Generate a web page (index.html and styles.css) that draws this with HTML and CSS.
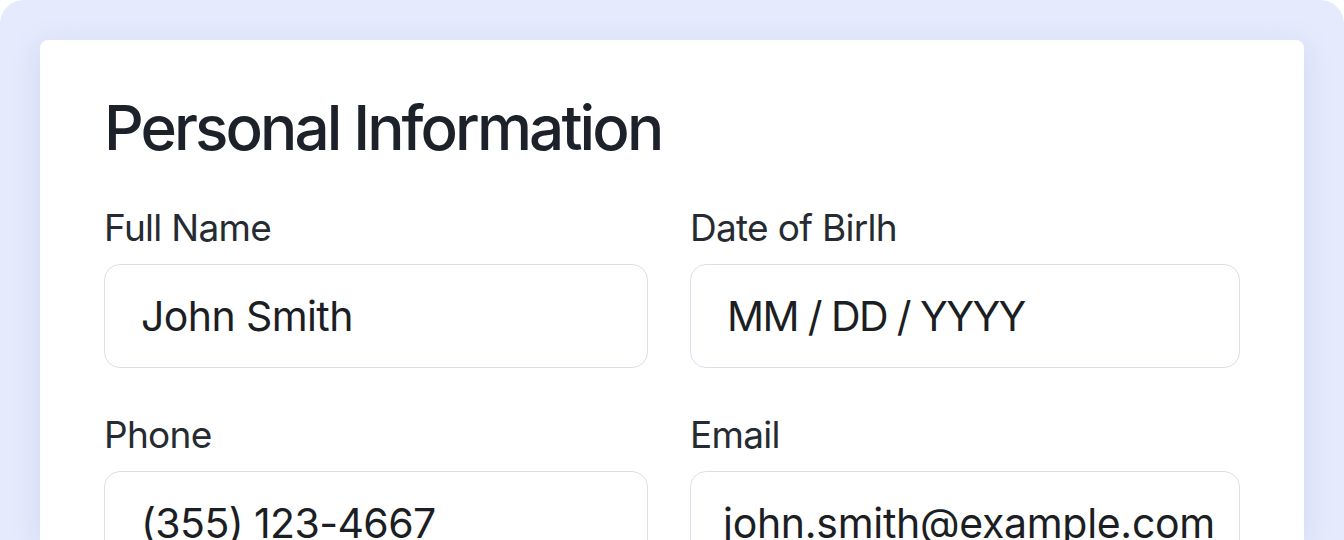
FILE: index.html
```html
<!DOCTYPE html>
<html lang="en">
<head>
  <meta charset="utf-8">
  <meta name="viewport" content="width=device-width, initial-scale=1">
  <title>Personal Information</title>
  <link rel="stylesheet" href="styles.css">
</head>
<body>
  <div class="frame">
    <div class="card">
      <h1 class="title">Personal Information</h1>
      <div class="form-grid">
        <div class="field">
          <label for="fullName">Full Name</label>
          <input type="text" id="fullName" value="John Smith">
        </div>
        <div class="field">
          <label for="dob">Date of Birlh</label>
          <input type="text" id="dob" class="date-input" value="MM / DD / YYYY">
        </div>
        <div class="field">
          <label for="phone">Phone</label>
          <input type="text" id="phone" value="(355) 123-4667">
        </div>
        <div class="field">
          <label for="email">Email</label>
          <input type="text" id="email" class="email-input" value="john.smith@example.com">
        </div>
      </div>
    </div>
  </div>
</body>
</html>
```

FILE: styles.css
```css
html, body {
  margin: 0;
  height: 100%;
  background: #ffffff;
}
body {
  font-family: Inter, "Liberation Sans", sans-serif;
  color: #1f2329;
  overflow: hidden;
}
.frame {
  height: 100%;
  box-sizing: border-box;
  padding: 40px 40px 0;
  background: #e5eafc;
  border-radius: 24px 24px 0 0;
}
.card {
  background: #ffffff;
  border-radius: 8px 8px 0 0;
  box-shadow: 0 6px 28px rgba(110, 128, 200, 0.18);
  padding: 52px 64px 40px;
  height: 100%;
  box-sizing: border-box;
}
.title {
  margin: 0 0 42px;
  font-size: 62px;
  font-weight: 500;
  line-height: 72px;
  letter-spacing: -2.9px;
  color: #1d222a;
}
.form-grid {
  display: grid;
  grid-template-columns: 544fr 550fr;
  column-gap: 42px;
  row-gap: 45px;
}
.field {
  display: flex;
  flex-direction: column;
}
.field label {
  font-size: 37px;
  line-height: 44px;
  letter-spacing: -0.7px;
  color: #262b32;
  margin-bottom: 14px;
}
.field input {
  font-family: Inter, "Liberation Sans", sans-serif;
  font-size: 41px;
  letter-spacing: -0.6px;
  color: #1b1e23;
  height: 104px;
  box-sizing: border-box;
  padding: 0 16px 0 36px;
  border: 1.5px solid #dcdfe8;
  border-radius: 16px;
  background: #ffffff;
  outline: none;
  width: 100%;
}
.field .date-input {
  letter-spacing: -1.6px;
}
.field .email-input {
  padding-left: 32px;
  letter-spacing: -0.3px;
}
```
